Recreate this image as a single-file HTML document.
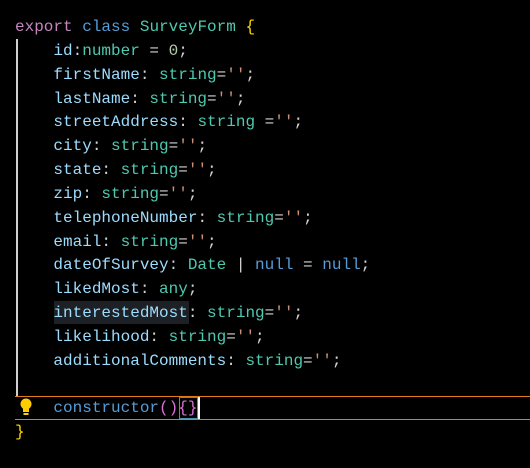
<!DOCTYPE html><html><head><style>
body{margin:0;background:#000;width:530px;height:468px;overflow:hidden;position:relative;font-family:"Liberation Mono",monospace;font-size:16px;color:#d4d4d4}
.l{position:absolute;left:15px;height:24px;line-height:24px;white-space:pre}
.k{color:#c586c0}.b{color:#569cd6}.t{color:#4ec9b0}.p{color:#9cdcfe}.s{color:#ce9178}.n{color:#b5cea8}.y{color:#ffd700}.m{color:#da70d6}
</style></head><body>
<div style="position:absolute;left:16px;top:39px;width:2px;height:357px;background:#cfcfcf"></div>
<div style="position:absolute;left:15px;top:396px;width:515px;height:22px;border-top:1px solid #e07a1a;border-bottom:1px solid #e07a1a"></div>
<div style="position:absolute;left:54px;top:301px;width:135px;height:23px;background:#1d2024"></div>
<div style="position:absolute;left:179px;top:397px;width:19px;height:22px;border:1px solid #4a90b0;box-sizing:border-box"></div>
<div style="position:absolute;left:198px;top:397px;width:2px;height:22px;background:#fff"></div>
<svg style="position:absolute;left:19px;top:398px" width="14" height="18"><circle cx="7" cy="6" r="5.5" fill="#ffcc00"/><rect x="4" y="10" width="6" height="4" fill="#ffcc00"/><rect x="4.5" y="15" width="5" height="2" fill="#ffcc00"/></svg>
<div class="l" style="top:15px"><span class="k">export</span> <span class="b">class</span> <span class="t">SurveyForm</span> <span class="y">{</span></div>
<div class="l" style="top:39px">    <span class="p">id</span>:<span class="t">number</span> = <span class="n">0</span>;</div>
<div class="l" style="top:63px">    <span class="p">firstName</span>: <span class="t">string</span>=<span class="s">''</span>;</div>
<div class="l" style="top:87px">    <span class="p">lastName</span>: <span class="t">string</span>=<span class="s">''</span>;</div>
<div class="l" style="top:110px">    <span class="p">streetAddress</span>: <span class="t">string</span> =<span class="s">''</span>;</div>
<div class="l" style="top:134px">    <span class="p">city</span>: <span class="t">string</span>=<span class="s">''</span>;</div>
<div class="l" style="top:158px">    <span class="p">state</span>: <span class="t">string</span>=<span class="s">''</span>;</div>
<div class="l" style="top:182px">    <span class="p">zip</span>: <span class="t">string</span>=<span class="s">''</span>;</div>
<div class="l" style="top:206px">    <span class="p">telephoneNumber</span>: <span class="t">string</span>=<span class="s">''</span>;</div>
<div class="l" style="top:230px">    <span class="p">email</span>: <span class="t">string</span>=<span class="s">''</span>;</div>
<div class="l" style="top:253px">    <span class="p">dateOfSurvey</span>: <span class="t">Date</span> | <span class="b">null</span> = <span class="b">null</span>;</div>
<div class="l" style="top:277px">    <span class="p">likedMost</span>: <span class="t">any</span>;</div>
<div class="l" style="top:301px">    <span class="p">interestedMost</span>: <span class="t">string</span>=<span class="s">''</span>;</div>
<div class="l" style="top:325px">    <span class="p">likelihood</span>: <span class="t">string</span>=<span class="s">''</span>;</div>
<div class="l" style="top:349px">    <span class="p">additionalComments</span>: <span class="t">string</span>=<span class="s">''</span>;</div>
<div class="l" style="top:396px">    <span style="color:#569cd6">constructor</span><span class="m">()</span><span class="m">{}</span></div>
<div class="l" style="top:420px"><span class="y">}</span></div>
</body></html>
